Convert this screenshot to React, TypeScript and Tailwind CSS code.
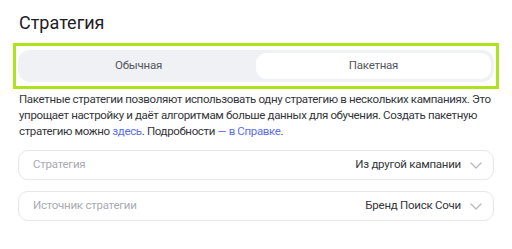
import React from "react";

const font = { fontFamily: "Roboto, 'Noto Sans', sans-serif" };

const Chevron: React.FC = () => (
  <svg width="12" height="7" viewBox="0 0 12 7" fill="none" className="ml-[9px] shrink-0">
    <path d="M1 1l5 5 5-5" stroke="#b5b8c0" strokeWidth="1.3" strokeLinecap="round" strokeLinejoin="round" />
  </svg>
);

const SelectRow: React.FC<{ label: string; value: string }> = ({ label, value }) => (
  <div className="flex h-[30px] items-center rounded-[10px] border border-[#e6e7eb] pl-[14px] pr-[11px] text-[11.5px] tracking-[-0.25px]">
    <span className="flex-1 text-[#a9abb1]">{label}</span>
    <span className="text-[#34363b]">{value}</span>
    <Chevron />
  </div>
);

export default function App() {
  const [mode, setMode] = React.useState<"single" | "package">("package");

  return (
    <div className="h-[249px] w-[512px] bg-white px-[13px] pt-[12px]" style={font}>
      <h1 className="pl-[6px] text-[18px] leading-[22px] text-[#1f2024]">Стратегия</h1>

      {/* segmented switch */}
      <div className="mt-[9px] border-[3px] border-[#aee21f] px-[2px] py-[4px]">
        <div className="flex h-[32px] rounded-[12px] bg-[#eff1f5] p-[3px] text-[11.5px] tracking-[-0.25px] text-[#55575c]">
          <button
            className={`flex-1 rounded-[10px] ${mode === "single" ? "bg-white" : ""}`}
            onClick={() => setMode("single")}
          >
            Обычная
          </button>
          <button
            className={`flex-1 rounded-[10px] ${mode === "package" ? "bg-white" : ""}`}
            onClick={() => setMode("package")}
          >
            Пакетная
          </button>
        </div>
      </div>

      <p className="mt-[2px] whitespace-nowrap pl-[6px] text-[11.5px] leading-[16px] tracking-[-0.35px] text-[#34363b]">
        Пакетные стратегии позволяют использовать одну стратегию в нескольких кампаниях. Это
        <br />
        упрощает настройку и даёт алгоритмам больше данных для обучения. Создать пакетную
        <br />
        стратегию можно <a className="text-[#5b6ef0]">здесь</a>. Подробности{" "}
        <a className="text-[#5b6ef0]">— в Справке</a>.
      </p>

      <div className="mt-[11px] flex flex-col gap-[11px] px-[5px]">
        <SelectRow label="Стратегия" value="Из другой кампании" />
        <SelectRow label="Источник стратегии" value="Бренд Поиск Сочи" />
      </div>
    </div>
  );
}
